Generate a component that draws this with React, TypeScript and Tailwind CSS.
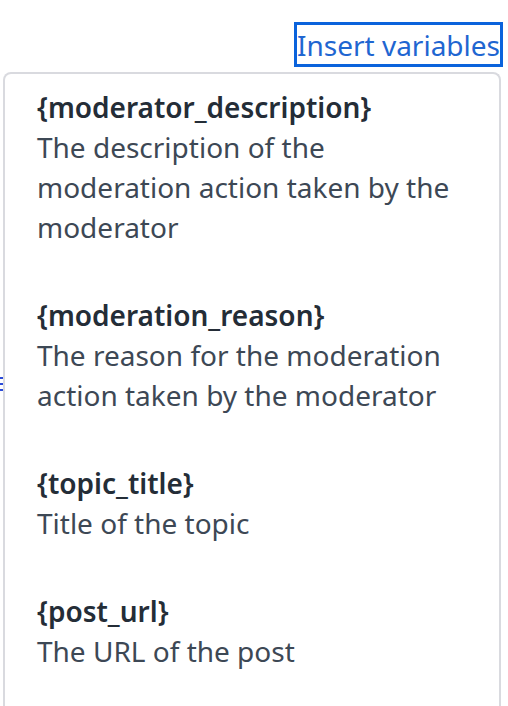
import React from 'react';

const variables = [
  {
    name: '{moderator_description}',
    lines: ['The description of the', 'moderation action taken by the', 'moderator'],
  },
  {
    name: '{moderation_reason}',
    lines: ['The reason for the moderation', 'action taken by the moderator'],
  },
  { name: '{topic_title}', lines: ['Title of the topic'] },
  { name: '{post_url}', lines: ['The URL of the post'] },
];

export default function App() {
  return (
    <div
      className="relative w-[508px] h-[706px] overflow-hidden bg-white"
      style={{ fontFamily: '"Noto Sans", "Open Sans", sans-serif' }}
    >
      {/* stray marks of the editor toolbar behind the menu */}
      <div className="absolute left-0 top-[377px] flex flex-col gap-[4px]">
        <span className="block w-[3px] h-[2px] bg-[#2b4bd8]" />
        <span className="block w-[3px] h-[2px] bg-[#2b4bd8]" />
        <span className="block w-[3px] h-[2px] bg-[#2b4bd8]" />
      </div>

      <div className="flex justify-end pt-[22px] pr-[5px]">
        <button className="h-[45px] px-0 border-[3px] border-[#0a63dc] text-[#1f66d1] text-[28px] leading-none">
          Insert variables
        </button>
      </div>

      <div className="ml-[3px] mr-[7px] mt-[5px] h-[700px] rounded-t-[8px] border-2 border-b-0 border-[#d9dadf] pt-[13px] pl-[32px]">
        <div className="flex flex-col gap-[48px]">
          {variables.map((v) => (
            <div key={v.name} className="text-[28px] leading-[40px]">
              <div className="font-semibold text-[#242d37]">{v.name}</div>
              {v.lines.map((l) => (
                <div key={l} className="text-[#3d4855]">
                  {l}
                </div>
              ))}
            </div>
          ))}
        </div>
      </div>
    </div>
  );
}
